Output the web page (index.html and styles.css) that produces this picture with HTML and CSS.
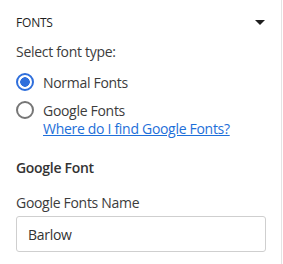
FILE: index.html
```html
<!DOCTYPE html>
<html>
<head>
<meta charset="utf-8">
<link rel="stylesheet" href="styles.css">
</head>
<body>
<div class="panel">
  <div class="header">
    <span class="title">FONTS</span>
    <span class="caret"></span>
  </div>
  <div class="label">Select font type:</div>
  <div class="radio-row">
    <span class="radio checked"></span>
    <span class="radio-text">Normal Fonts</span>
  </div>
  <div class="radio-row second">
    <span class="radio"></span>
    <span class="radio-text">Google Fonts</span>
  </div>
  <a class="link" href="#">Where do I find Google Fonts?</a>
  <div class="section">Google Font</div>
  <div class="label field-label">Google Fonts Name</div>
  <div class="input">Barlow</div>
</div>
</body>
</html>
```
FILE: styles.css
```css
html, body {
  margin: 0;
  padding: 0;
  background: #fff;
}
body {
  font-family: "Open Sans", "Noto Sans", sans-serif;
  color: #333;
  letter-spacing: -0.3px;
}
.panel {
  width: 282px;
  height: 264px;
  box-sizing: border-box;
  border-right: 1px solid #e4e4e4;
  padding: 0 15px 0 16px;
  display: flex;
  flex-direction: column;
}
.header {
  height: 44px;
  display: flex;
  align-items: center;
  justify-content: space-between;
}
.title {
  font-size: 12px;
  color: #1e1e1e;
  letter-spacing: -0.2px;
}
.caret {
  width: 0;
  height: 0;
  border-left: 5px solid transparent;
  border-right: 5px solid transparent;
  border-top: 5px solid #1e1e1e;
  margin-right: 1px;
}
.label {
  font-size: 14px;
  color: #3c3c3c;
  line-height: 20px;
  margin-top: -2px;
}
.radio-row {
  display: flex;
  align-items: center;
  gap: 9px;
  margin-top: 11px;
  height: 18px;
}
.radio-row.second {
  margin-top: 10px;
}
.radio {
  width: 18px;
  height: 18px;
  box-sizing: border-box;
  border-radius: 50%;
  border: 2px solid #767676;
  flex: none;
}
.radio.checked {
  border-color: #2f6fdc;
  background: radial-gradient(circle, #2f6fdc 0 4.5px, #fff 5px);
}
.radio-text {
  font-size: 14px;
  color: #3c3c3c;
}
.link {
  margin-left: 27px;
  font-size: 14px;
  line-height: 20px;
  color: #1e6fd9;
  text-decoration: underline;
}
.section {
  margin-top: 19px;
  font-size: 14px;
  font-weight: 600;
  color: #333;
  line-height: 20px;
}
.field-label {
  margin-top: 15px;
}
.input {
  margin-top: 3px;
  height: 36px;
  box-sizing: border-box;
  border: 1px solid #cfcfcf;
  border-radius: 3px;
  padding: 0 11px;
  font-size: 14px;
  color: #333;
  display: flex;
  align-items: center;
  width: 250px;
}
```
